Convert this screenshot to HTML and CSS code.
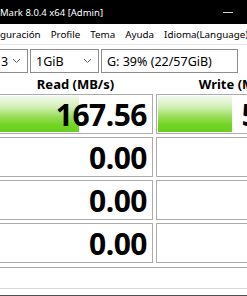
FILE: index.html
```html
<!DOCTYPE html>
<html lang="es">
<head>
    <meta charset="UTF-8">
    <title>CrystalDiskMark</title>
    <link rel="stylesheet" href="styles.css">
</head>
<body>
    <div class="window">
        <!-- Barra de título -->
        <div class="titlebar">
            <span class="title">Mark 8.0.4 x64 [Admin]</span>
            <span class="min-btn"></span>
        </div>

        <!-- Menú -->
        <div class="menubar">
            <span>guración</span>
            <span>Profile</span>
            <span>Tema</span>
            <span>Ayuda</span>
            <span>Idioma(Language)</span>
        </div>

        <!-- Selectores -->
        <div class="controls">
            <div class="combo combo-count">
                <span>3</span>
                <svg class="chev" width="9" height="6" viewBox="0 0 9 6"><polyline points="1,1 4.5,4.5 8,1" fill="none" stroke="#606060" stroke-width="1"/></svg>
            </div>
            <div class="combo combo-size">
                <span>1GiB</span>
                <svg class="chev" width="9" height="6" viewBox="0 0 9 6"><polyline points="1,1 4.5,4.5 8,1" fill="none" stroke="#606060" stroke-width="1"/></svg>
            </div>
            <div class="combo combo-drive">
                <span>G: 39% (22/57GiB)</span>
            </div>
        </div>

        <!-- Cabeceras -->
        <div class="headers">
            <div>Read (MB/s)</div>
            <div>Write (MB/s)</div>
        </div>

        <!-- Resultados -->
        <div class="results">
            <div class="cell"><div class="bar" style="width: 79px"></div><span class="value">167.56</span></div>
            <div class="cell"><div class="bar" style="width: 74px"></div><span class="value">58.24</span></div>
            <div class="cell"><span class="value">0.00</span></div>
            <div class="cell"><span class="value">0.00</span></div>
            <div class="cell"><span class="value">0.00</span></div>
            <div class="cell"><span class="value">0.00</span></div>
            <div class="cell"><span class="value">0.00</span></div>
            <div class="cell"><span class="value">0.00</span></div>
        </div>

        <!-- Comentario -->
        <div class="comment"></div>
    </div>
</body>
</html>
```

FILE: styles.css
```css
body {
    margin: 0;
    padding: 0;
    width: 247px;
    height: 296px;
    overflow: hidden;
    background-color: #ffffff;
    font-family: "Noto Sans", "Open Sans", sans-serif;
    color: #000000;
}

.window {
    width: 247px;
    height: 296px;
    display: flex;
    flex-direction: column;
    border-bottom: 1px solid #505050;
    box-sizing: border-box;
}

/* Barra de título negra */
.titlebar {
    height: 24px;
    background-color: #000000;
    display: flex;
    align-items: center;
    justify-content: space-between;
    padding: 0 14px 0 0;
    flex-shrink: 0;
}

.title {
    color: #ffffff;
    font-size: 9.5px;
}

.min-btn {
    width: 10px;
    height: 1px;
    background-color: #d0d0d0;
}

/* Menú */
.menubar {
    height: 20px;
    display: flex;
    align-items: center;
    gap: 10px;
    font-size: 9.8px;
    white-space: nowrap;
    border-bottom: 1px solid #e6e6e6;
    flex-shrink: 0;
}

/* Selectores */
.controls {
    display: flex;
    gap: 2px;
    margin-top: 4px;
    height: 24px;
    flex-shrink: 0;
}

.combo {
    border: 1px solid #8c8c8c;
    box-sizing: border-box;
    height: 24px;
    display: flex;
    align-items: center;
    justify-content: space-between;
    font-size: 12.5px;
    padding: 0 6px 0 5px;
    white-space: nowrap;
    flex-shrink: 0;
}

.combo-count {
    width: 31px;
    margin-left: -3px;
    padding-left: 3px;
}

.combo-size {
    width: 69px;
}

.combo-drive {
    width: 137px;
}

.chev {
    display: block;
}

/* Cabeceras */
.headers {
    display: grid;
    grid-template-columns: 155px 166px;
    column-gap: 3px;
    margin-left: -2px;
    height: 21px;
    align-items: center;
    font-size: 13px;
    font-weight: bold;
    text-align: center;
    white-space: nowrap;
    flex-shrink: 0;
}

/* Celdas de resultados */
.results {
    display: grid;
    grid-template-columns: 155px 166px;
    grid-auto-rows: 40px;
    gap: 3px;
    margin-left: -2px;
    flex-shrink: 0;
}

.cell {
    position: relative;
    border: 1px solid #ababab;
    box-sizing: border-box;
    display: flex;
    align-items: center;
    justify-content: flex-end;
    padding: 1px 5px 0 1px;
    overflow: hidden;
}

.bar {
    position: absolute;
    left: 1px;
    top: 1px;
    bottom: 1px;
    background: linear-gradient(to bottom, #f2f8ee 0%, #d3f0b8 30%, #98dd58 58%, #72d422 80%, #6bcd1e 100%);
}

.value {
    position: relative;
    font-size: 30px;
    font-weight: bold;
    letter-spacing: -0.5px;
    line-height: 1;
}

/* Cuadro de comentario */
.comment {
    margin-top: 4px;
    height: 20px;
    border-top: 1px solid #a8a8a8;
    border-bottom: 1px solid #d8d8d8;
    flex-shrink: 0;
}
```
